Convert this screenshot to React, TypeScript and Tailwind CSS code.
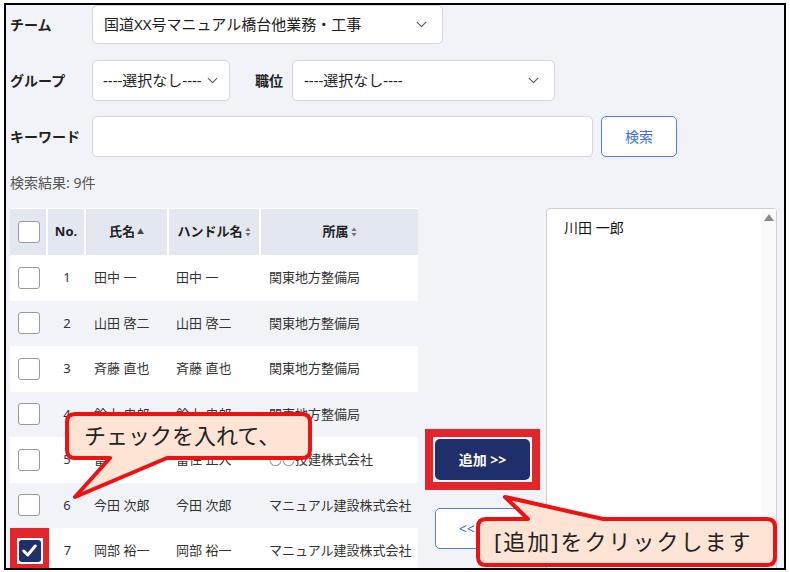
import { ChevronDown } from 'lucide-react';

const font = { fontFamily: '"Noto Sans", "Noto Sans CJK JP", sans-serif' };

type Member = { no: number; name: string; handle: string; org: string };

const members: Member[] = [
  { no: 1, name: '田中 一', handle: '田中 一', org: '関東地方整備局' },
  { no: 2, name: '山田 啓二', handle: '山田 啓二', org: '関東地方整備局' },
  { no: 3, name: '斉藤 直也', handle: '斉藤 直也', org: '関東地方整備局' },
  { no: 4, name: '鈴木 忠郎', handle: '鈴木 忠郎', org: '関東地方整備局' },
  { no: 5, name: '富住 正人', handle: '富住 正人', org: '○○技建株式会社' },
  { no: 6, name: '今田 次郎', handle: '今田 次郎', org: 'マニュアル建設株式会社' },
  { no: 7, name: '岡部 裕一', handle: '岡部 裕一', org: 'マニュアル建設株式会社' },
];

function Select({ value, className }: { value: string; className: string }) {
  return (
    <div
      className={`flex items-center justify-between rounded-[5px] border border-[#d4d6da] bg-white pl-[11px] pr-[12px] text-[15px] text-[#222] ${className}`}
    >
      <span className="whitespace-nowrap">{value}</span>
      <ChevronDown size={17} strokeWidth={1.6} className="text-[#555]" />
    </div>
  );
}

function Label({ text, className = 'w-[82px]' }: { text: string; className?: string }) {
  return <div className={`text-[14px] font-bold text-[#222] ${className}`}>{text}</div>;
}

function SortBoth() {
  return (
    <svg width="6" height="10" viewBox="0 0 6 10" className="ml-[2px]">
      <path d="M3 0.5 L5.6 4 L0.4 4 Z" fill="#777" />
      <path d="M3 9.5 L5.6 6 L0.4 6 Z" fill="#777" />
    </svg>
  );
}

function Box({ checked = false }: { checked?: boolean }) {
  if (checked) {
    return (
      <div className="flex h-[26px] w-[26px] items-center justify-center bg-white">
        <div className="flex h-[22px] w-[22px] items-center justify-center rounded-[3px] bg-[#1f2f6b]">
          <svg width="15" height="13" viewBox="0 0 15 13">
            <path d="M1.8 7 L5.8 11 L13.2 2" fill="none" stroke="#fff" strokeWidth="3" strokeLinecap="round" strokeLinejoin="round" />
          </svg>
        </div>
      </div>
    );
  }
  return <div className="h-[22px] w-[22px] rounded-[3px] border-[1.5px] border-[#9a9a9a] bg-white" />;
}

function Callouts() {
  return (
    <div className="pointer-events-none absolute inset-0">
      <svg width="790" height="572" className="absolute left-0 top-0">
        <path
          d="M75 497 L110 458 L75 458 Q67 458 67 450 L67 422 Q67 414 75 414 L302 414 Q310 414 310 422 L310 450 Q310 458 302 458 L167 458 Z"
          fill="#fde4d5"
          stroke="#ee1111"
          strokeWidth="4"
          strokeLinejoin="round"
        />
        <path
          d="M505 497 L603 519 L767 519 Q775 519 775 527 L775 557 Q775 565 767 565 L486 565 Q478 565 478 557 L478 527 Q478 519 486 519 L528 519 Z"
          fill="#fde4d5"
          stroke="#ee1111"
          strokeWidth="4"
          strokeLinejoin="round"
        />
      </svg>
      <div className="absolute left-[84px] top-[420px] text-[22px] leading-[30px] text-[#222]">
        チェックを入れて、
      </div>
      <div className="absolute left-[494px] top-[526px] text-[22px] leading-[30px] tracking-[2px] text-[#222]">
        [追加]をクリックします
      </div>
    </div>
  );
}

export default function App() {
  return (
    <div className="relative h-[572px] w-[790px] overflow-hidden bg-white pl-[4px] pt-[3px]" style={font}>
      <div className="h-[567px] w-[782px] overflow-hidden border-2 border-black bg-[#f1f3f8]">
        <div className="pl-[4px]">
          {/* team */}
          <div className="flex h-[39px] items-center">
            <Label text="チーム" />
            <Select value="国道XX号マニュアル橋台他業務・工事" className="h-[39px] w-[351px]" />
          </div>

          {/* group / position */}
          <div className="mt-[16px] flex h-[41px] items-center">
            <Label text="グループ" />
            <Select value="----選択なし----" className="h-[41px] w-[138px] !pl-[10px] !pr-[8px]" />
            <Label text="職位" className="ml-[25px] w-[37px]" />
            <Select value="----選択なし----" className="h-[41px] w-[263px]" />
          </div>

          {/* keyword */}
          <div className="mt-[15px] flex h-[41px] items-center">
            <Label text="キーワード" />
            <div className="h-[41px] w-[501px] rounded-[5px] border border-[#d4d6da] bg-white" />
            <button className="ml-[8px] flex h-[41px] w-[76px] items-center justify-center rounded-[5px] border-[1.5px] border-[#4f7fe8] bg-white text-[14px] text-[#3d6fe0]">
              検索
            </button>
          </div>

          <div className="mt-[17px] text-[14px] leading-[18px] text-[#555]">検索結果: 9件</div>

          {/* table + selection */}
          <div className="mt-[16px] flex">
            <div className="w-[408px] text-[13px] text-[#333]">
              <div className="flex h-[47px] border-t border-white bg-[#e3e7ef] font-bold text-[#222]">
                <div className="flex w-[38px] items-center border-r-2 border-white pl-[8px]">
                  <Box />
                </div>
                <div className="flex w-[38px] items-center justify-center border-r-2 border-white">No.</div>
                <div className="flex w-[83px] items-center justify-center border-r-2 border-white">
                  氏名<span className="ml-[2px] text-[7px] text-[#444]">▲</span>
                </div>
                <div className="flex w-[92px] items-center justify-center border-r-2 border-white">
                  ハンドル名<SortBoth />
                </div>
                <div className="flex flex-1 items-center justify-center">
                  所属<SortBoth />
                </div>
              </div>
              {members.map((m, i) => (
                <div
                  key={m.no}
                  className={`flex h-[45.5px] items-center ${i % 2 === 1 ? 'bg-[#f1f3f8]' : 'bg-white'}`}
                >
                  {m.no === 7 ? (
                    <div className="flex h-full w-[39px] items-center justify-center bg-[#e3262b]">
                      <Box checked />
                    </div>
                  ) : (
                    <div className="flex w-[38px] items-center pl-[8px]">
                      <Box />
                    </div>
                  )}
                  <div className={`text-center ${m.no === 7 ? 'w-[37px]' : 'w-[38px]'}`}>{m.no}</div>
                  <div className="w-[83px] whitespace-nowrap pl-[8px]">{m.name}</div>
                  <div className="w-[92px] whitespace-nowrap pl-[7px]">{m.handle}</div>
                  <div className="flex-1 whitespace-nowrap pl-[8px]">{m.org}</div>
                </div>
              ))}
            </div>

            {/* buttons */}
            <div className="flex w-[128px] flex-col pl-[7px] pt-[221px]">
              <div className="w-[115px] border-[8px] border-[#e3262b] bg-[#f4f4f6] p-[2px]">
                <button className="flex h-[41px] w-full items-center justify-center rounded-[5px] bg-[#1f2f6b] text-[14px] font-bold text-white">
                  追加 &gt;&gt;
                </button>
              </div>
              <button className="ml-[10px] mt-[18px] flex h-[41px] w-[95px] items-center justify-center rounded-[5px] border-[1.5px] border-[#4f7fe8] bg-white text-[14px] text-[#3d6fe0]">
                &lt;&lt; 削除
              </button>
            </div>

            {/* selected list */}
            <div className="flex h-[400px] w-[231px] rounded-t-[4px] border border-[#cfcfcf] bg-white">
              <div className="flex-1 pl-[17px] pt-[9px] text-[14px] leading-[20px] text-[#111]">川田 一郎</div>
              <div className="flex w-[15px] justify-center bg-[#fafafa] pt-[5px]">
                <svg width="10" height="7" viewBox="0 0 10 7">
                  <path d="M5 0 L10 7 L0 7 Z" fill="#8a8a8a" />
                </svg>
              </div>
            </div>
          </div>
        </div>
      </div>
      <Callouts />
    </div>
  );
}
